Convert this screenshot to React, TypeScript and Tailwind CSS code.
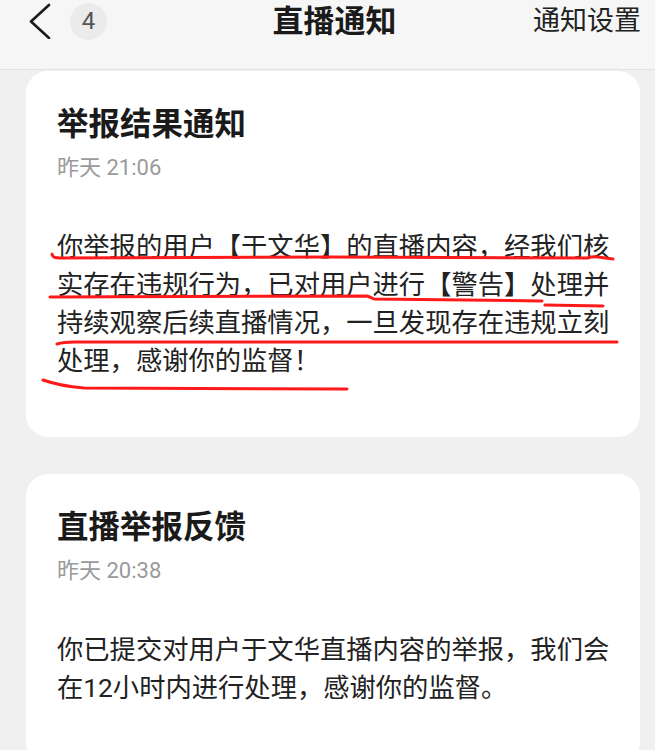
interface Notice {
  title: string
  time: string
  body: string
}

const notices: Notice[] = [
  {
    title: '举报结果通知',
    time: '昨天 21:06',
    body: '你举报的用户【于文华】的直播内容，经我们核实存在违规行为，已对用户进行【警告】处理并持续观察后续直播情况，一旦发现存在违规立刻处理，感谢你的监督！',
  },
  {
    title: '直播举报反馈',
    time: '昨天 20:38',
    body: '你已提交对用户于文华直播内容的举报，我们会在12小时内进行处理，感谢你的监督。',
  },
]

function NoticeCard({ notice }: { notice: Notice }) {
  return (
    <div className="bg-white rounded-[22px] pl-[31px] pr-[28px] pt-[32px] pb-[57px]">
      <h2 className="text-[31.5px] leading-[44px] font-bold text-[#1a1a1a]">{notice.title}</h2>
      <p className="mt-[6px] text-[22px] leading-[30px] text-[#9a9a9a]">{notice.time}</p>
      <p className="mt-[45px] text-[26.3px] leading-[38px] text-[#222] [text-spacing-trim:space-all]">
        {notice.body}
      </p>
    </div>
  )
}

export default function App() {
  return (
    <div
      className="relative w-[655px] h-[750px] overflow-hidden bg-[#f0f0f0]"
      style={{ fontFamily: 'Roboto, "Noto Sans CJK SC", sans-serif' }}
    >
      {/* 顶部导航 */}
      <header className="h-[70px] bg-[#f6f6f6] border-b border-[#e2e2e2]">
        <div className="h-[42px] grid grid-cols-[1fr_auto_1fr] items-center">
          <div className="flex items-center">
            <svg className="ml-[28px]" width="24" height="36" viewBox="0 0 24 36" fill="none">
              <path d="M21 2 L3 18.5 L21 35" stroke="#1a1a1a" strokeWidth="2.6" strokeLinecap="round" strokeLinejoin="round" />
            </svg>
            <span className="ml-[18px] w-[37px] h-[37px] rounded-full bg-[#ebebeb] flex items-center justify-center text-[24px] text-[#555]">
              4
            </span>
          </div>
          <h1 className="ml-[14px] text-[31px] font-bold text-[#1a1a1a] leading-none">直播通知</h1>
          <div className="flex justify-end pr-[14px]">
            <span className="text-[27px] text-[#222] leading-none">通知设置</span>
          </div>
        </div>
      </header>

      {/* 通知列表 */}
      <main className="pl-[26px] pr-[15px] pt-[1px] flex flex-col gap-[37px]">
        {notices.map(n => (
          <NoticeCard key={n.title} notice={n} />
        ))}
      </main>

      {/* 手绘红色下划线 */}
      <svg
        className="absolute left-0 top-0 pointer-events-none"
        width="655"
        height="750"
        viewBox="0 0 655 750"
        fill="none"
        stroke="#ff1a1a"
        strokeWidth="3"
        strokeLinecap="round"
      >
        <path d="M52 254 Q52 258 60 258 L330 257 L588 258 Q592 256 598 257 L613 259" />
        <path d="M50 297 L367 296 Q370 297 374 299 L542 301" />
        <path d="M545 305 L603 306" />
        <path d="M57 344 Q64 342 74 342 L617 342" />
        <path d="M43 380 Q60 386 84 388 L347 389" />
      </svg>
    </div>
  )
}
